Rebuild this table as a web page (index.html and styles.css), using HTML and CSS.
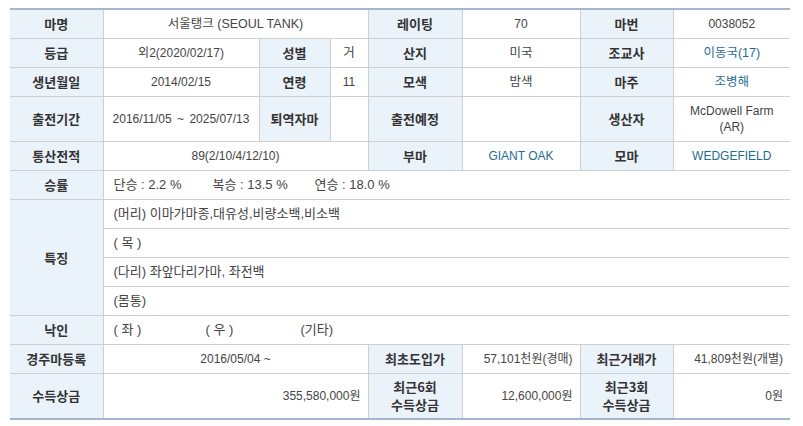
FILE: index.html
```html
<!DOCTYPE html>
<html lang="ko">
<head>
<meta charset="utf-8">
<title>마필 정보</title>
<link rel="stylesheet" href="styles.css">
</head>
<body>
<div class="wrap">
<table class="info">
  <colgroup>
    <col class="c1"><col class="c2"><col class="c3"><col class="c4">
    <col class="c5"><col class="c6"><col class="c7"><col class="c8">
  </colgroup>
  <tbody>
    <tr>
      <th>마명</th>
      <td colspan="3" class="ko">서울탱크 (SEOUL TANK)</td>
      <th>레이팅</th>
      <td>70</td>
      <th>마번</th>
      <td>0038052</td>
    </tr>
    <tr>
      <th>등급</th>
      <td>외2(2020/02/17)</td>
      <th>성별</th>
      <td class="ko">거</td>
      <th>산지</th>
      <td class="ko">미국</td>
      <th>조교사</th>
      <td class="ko"><a class="lnk" href="#">이동국(17)</a></td>
    </tr>
    <tr>
      <th>생년월일</th>
      <td>2014/02/15</td>
      <th>연령</th>
      <td>11</td>
      <th>모색</th>
      <td class="ko">밤색</td>
      <th>마주</th>
      <td class="ko"><a class="lnk" href="#">조병해</a></td>
    </tr>
    <tr class="tall">
      <th>출전기간</th>
      <td class="nowrap">2016/11/05 ~ 2025/07/13</td>
      <th>퇴역자마</th>
      <td></td>
      <th>출전예정</th>
      <td></td>
      <th>생산자</th>
      <td>McDowell Farm<br>(AR)</td>
    </tr>
    <tr>
      <th>통산전적</th>
      <td colspan="3">89(2/10/4/12/10)</td>
      <th>부마</th>
      <td><a class="lnk" href="#">GIANT OAK</a></td>
      <th>모마</th>
      <td><a class="lnk" href="#">WEDGEFIELD</a></td>
    </tr>
    <tr>
      <th>승률</th>
      <td colspan="7" class="left"><span class="w1">단승 : 2.2 %</span><span class="w2">복승 : 13.5 %</span><span>연승 : 18.0 %</span></td>
    </tr>
    <tr>
      <th rowspan="4">특징</th>
      <td colspan="7" class="left ko">(머리) 이마가마종,대유성,비량소백,비소백</td>
    </tr>
    <tr>
      <td colspan="7" class="left ko">( 목 )</td>
    </tr>
    <tr>
      <td colspan="7" class="left ko">(다리) 좌앞다리가마, 좌전백</td>
    </tr>
    <tr>
      <td colspan="7" class="left ko">(몸통)</td>
    </tr>
    <tr>
      <th>낙인</th>
      <td colspan="7" class="left ko"><span class="m1">( 좌 )</span><span class="m2">( 우 )</span><span>(기타)</span></td>
    </tr>
    <tr>
      <th>경주마등록</th>
      <td colspan="3">2016/05/04 ~</td>
      <th>최초도입가</th>
      <td class="right">57,101천원(경매)</td>
      <th>최근거래가</th>
      <td class="right">41,809천원(개별)</td>
    </tr>
    <tr class="tall">
      <th>수득상금</th>
      <td colspan="3" class="right">355,580,000원</td>
      <th class="two">최근6회<br>수득상금</th>
      <td class="right">12,600,000원</td>
      <th class="two">최근3회<br>수득상금</th>
      <td class="right">0원</td>
    </tr>
  </tbody>
</table>
</div>
</body>
</html>
```

FILE: styles.css
```css
html, body {
  margin: 0;
  padding: 0;
  background: #ffffff;
}

.wrap {
  padding: 8px 13px 0 10px;
}

.info {
  width: 780px;
  border-collapse: collapse;
  table-layout: fixed;
  border-top: 2px solid #a3b6cd;
  border-bottom: 2px solid #a3b6cd;
  font-family: "Liberation Sans", "Noto Sans CJK KR", sans-serif;
  font-size: 12px;
  color: #444;
}

.c1 { width: 93px; }
.c2 { width: 156px; }
.c3 { width: 71px; }
.c4 { width: 38px; }
.c5 { width: 94px; }
.c6 { width: 118px; }
.c7 { width: 93px; }
.c8 { width: 117px; }

.info th,
.info td {
  height: 28px;
  padding: 0 7px;
  border: 1px solid #cfcfcf;
  text-align: center;
  vertical-align: middle;
  line-height: 16px;
  box-sizing: content-box;
}

.info tr > :first-child { border-left: 0; }
.info tr > :last-child { border-right: 0; }
.info th[rowspan] { border-left: 0; }

.info th {
  background: #eaf2fa;
  color: #333;
  font-family: "Noto Sans CJK KR", sans-serif;
  font-weight: bold;
  font-size: 13px;
  line-height: 16px;
  padding: 0 2px;
}

.info th.two {
  line-height: 18px;
}

.info tr.tall th,
.info tr.tall td {
  height: 44px;
}

.info td.ko {
  font-size: 12.5px;
}

.info td.left {
  text-align: left;
  padding-left: 10px;
  font-size: 13px;
}

.info td.right {
  text-align: right;
}

.info td.nowrap {
  white-space: nowrap;
  padding: 0 2px;
  word-spacing: 2px;
}

.lnk {
  color: #1f6c92;
  text-decoration: none;
}

.w1 { display: inline-block; width: 99px; }
.w2 { display: inline-block; width: 102px; }
.m1 { display: inline-block; width: 92px; }
.m2 { display: inline-block; width: 95px; }
```
